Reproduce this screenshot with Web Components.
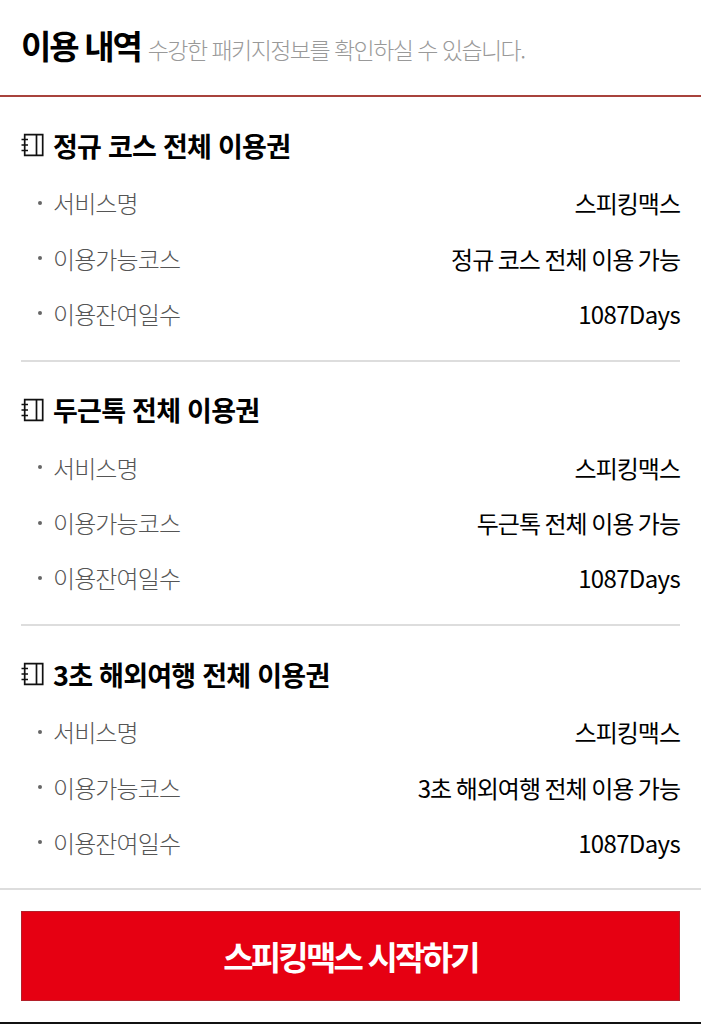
<!DOCTYPE html>
<html lang="ko">
<head>
<meta charset="utf-8">
<title>이용 내역</title>
<style>
  html, body { margin: 0; background: #fff; }
  body { height: 1024px; overflow: hidden; font-family: "Noto Sans CJK KR", "Noto Sans", sans-serif; letter-spacing: -1px; }
</style>
</head>
<body>
<usage-page>
  <span slot="title">이용 내역</span>
  <span slot="sub">수강한 패키지정보를 확인하실 수 있습니다.</span>
  <usage-card name="정규 코스 전체 이용권" course="정규 코스 전체 이용 가능"></usage-card>
  <usage-card name="두근톡 전체 이용권" course="두근톡 전체 이용 가능"></usage-card>
  <usage-card name="3초 해외여행 전체 이용권" course="3초 해외여행 전체 이용 가능"></usage-card>
  <span slot="cta">스피킹맥스 시작하기</span>
</usage-page>

<script>
// one label / value line of a card
class UsageRow extends HTMLElement {
  constructor() {
    super();
    this.attachShadow({ mode: 'open' });
    this.shadowRoot.innerHTML = `
      <style>
        :host { display: flex; align-items: center; justify-content: space-between; height: 55.4px; font-size: 24px; }
        .label { display: flex; align-items: center; color: #555; font-weight: 300; letter-spacing: -0.9px; }
        .label::before { content: ''; width: 4px; height: 4px; border-radius: 50%; background: #666; margin: 0 11px 0 17px; }
        .value { color: #000; font-weight: 400; word-spacing: -1.2px; }
        :host([latin]) .value { letter-spacing: -0.65px; }
      </style>
      <span class="label"><slot name="label"></slot></span>
      <span class="value"><slot name="value"></slot></span>`;
  }
}
customElements.define('usage-row', UsageRow);

class UsageCard extends HTMLElement {
  constructor() {
    super();
    this.attachShadow({ mode: 'open' });
  }

  connectedCallback() {
    const rows = [
      ['서비스명', '스피킹맥스', ''],
      ['이용가능코스', this.getAttribute('course'), ''],
      ['이용잔여일수', '1087Days', 'latin'],
    ];
    this.shadowRoot.innerHTML = `
      <style>
        :host { display: block; height: 264.5px; box-sizing: border-box; padding-top: 19px; border-bottom: 2px solid #ddd; }
        :host(:last-of-type) { border-bottom: 0; }
        h3 { display: flex; align-items: center; gap: 9px; height: 58px; margin: 0; font-size: 27px; font-weight: 700; color: #000; letter-spacing: -0.75px; }
        h3 svg { flex: none; width: 23px; height: 24px; }
        .rows { margin-top: 1px; }
      </style>
      <h3>
        <svg viewBox="0 0 23 24" fill="none" stroke="#111" stroke-width="1.7">
          <path d="M3.7 1.7h18v20.6h-18z"/><path d="M15.5 1.7v20.6"/>
          <path d="M0.5 6.5h6.5M0.5 12h6.5M0.5 17.5h6.5"/>
        </svg>
        <span>${this.getAttribute('name')}</span>
      </h3>
      <div class="rows">
        ${rows.map(([label, value, kind]) => `<usage-row ${kind}><span slot="label">${label}</span><span slot="value">${value}</span></usage-row>`).join('')}
      </div>`;
  }
}
customElements.define('usage-card', UsageCard);

class UsagePage extends HTMLElement {
  constructor() {
    super();
    this.attachShadow({ mode: 'open' });
    this.shadowRoot.innerHTML = `
      <style>
        :host { display: block; width: 701px; height: 1024px; box-sizing: border-box; border-bottom: 2px solid #111; }
        header { display: flex; align-items: baseline; gap: 7px; height: 97px; box-sizing: border-box; padding: 21px 21px 0; border-bottom: 2px solid #a8433c; }
        .title { font-size: 33px; font-weight: 700; color: #000; line-height: 48px; letter-spacing: -2.2px; }
        .sub { font-size: 23px; font-weight: 300; color: #999; letter-spacing: -1.55px; }
        .cards { padding: 0 21px; height: 791px; box-sizing: border-box; }
        footer { border-top: 2px solid #ddd; padding: 21px; }
        .cta { display: flex; align-items: center; justify-content: center; height: 90px; box-sizing: border-box; background: #e60012; border: 1px solid #b3202a; color: #fff; font-size: 33px; font-weight: 700; letter-spacing: -2.8px; }
      </style>
      <header>
        <span class="title"><slot name="title"></slot></span>
        <span class="sub"><slot name="sub"></slot></span>
      </header>
      <div class="cards"><slot></slot></div>
      <footer><div class="cta"><slot name="cta"></slot></div></footer>`;
  }
}
customElements.define('usage-page', UsagePage);
</script>
</body>
</html>
